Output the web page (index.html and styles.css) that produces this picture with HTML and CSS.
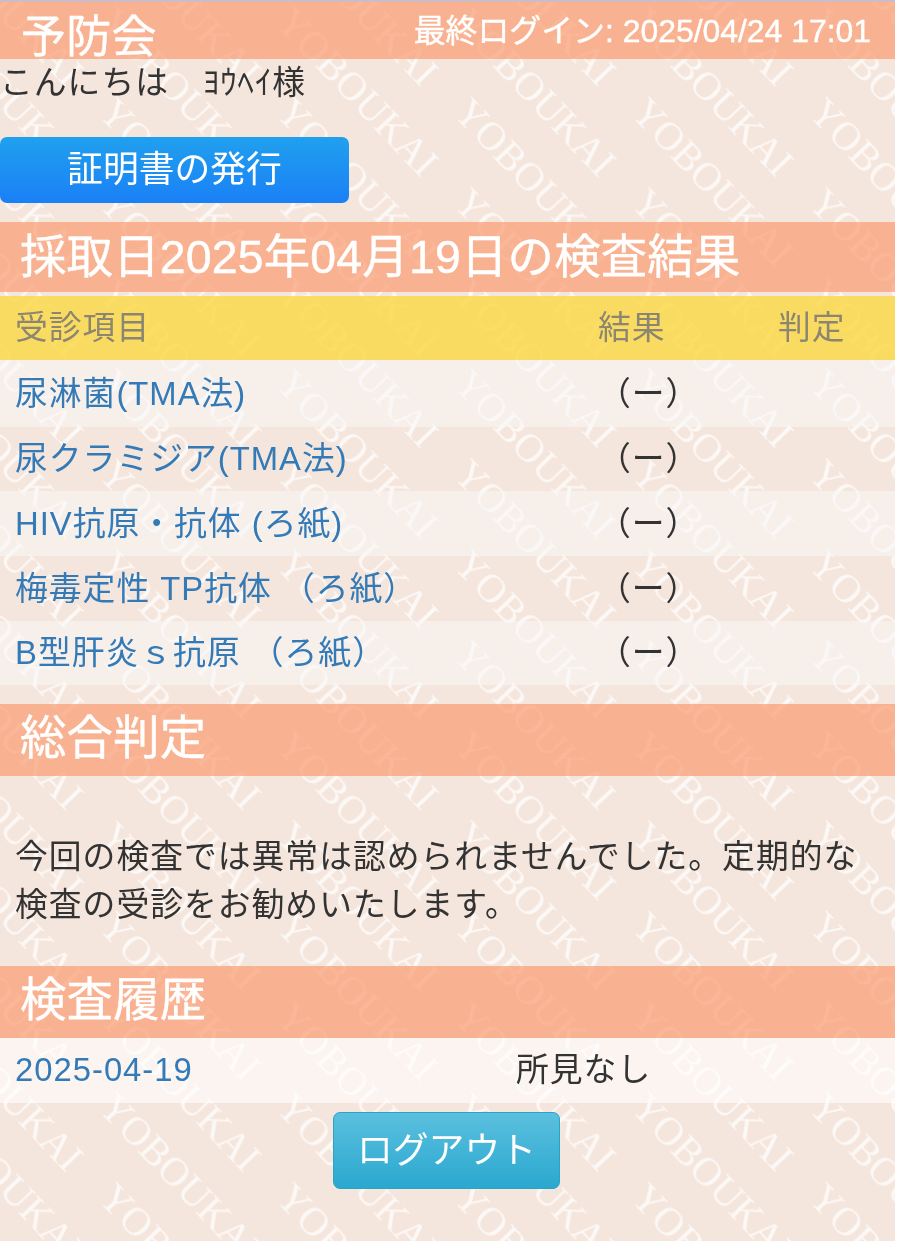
FILE: index.html
```html
<!DOCTYPE html>
<html lang="ja">
<head>
<meta charset="utf-8">
<title>予防会</title>
<link rel="stylesheet" href="styles.css">
</head>
<body>
<div class="page">
  <svg class="watermark" width="100%" height="100%" aria-hidden="true">
    <defs>
      <text id="wm" class="wm-text" transform="rotate(46.5)">YOBOUKAI</text>
      <pattern id="wm-tile" patternUnits="userSpaceOnUse" width="177.5" height="90.45" patternTransform="translate(95 21.5)">
        <use href="#wm" transform="translate(2 0)"/>
        <use href="#wm" transform="translate(2 90.45)"/>
        <use href="#wm" transform="translate(2 -90.45)"/>
        <use href="#wm" transform="translate(2 -180.9)"/>
      </pattern>
    </defs>
    <rect width="100%" height="100%" fill="url(#wm-tile)"/>
  </svg>
  <div class="content">
    <header class="bar top-bar">
      <span class="brand">予防会</span>
      <span class="last-login">最終ログイン: 2025/04/24 17:01</span>
    </header>
    <p class="hello">こんにちは　ﾖｳﾍｲ様</p>
    <a class="btn btn-cert">証明書の発行</a>
    <h2 class="bar section first">採取日2025年04月19日の検査結果</h2>
    <div class="grid head">
      <span class="c1">受診項目</span><span>結果</span><span>判定</span>
    </div>
    <div class="grid row odd r67"><a class="c1">尿淋菌(TMA法)</a><span>（ー）</span><span></span></div>
    <div class="grid row r64"><a class="c1">尿クラミジア(TMA法)</a><span>（ー）</span><span></span></div>
    <div class="grid row odd r65"><a class="c1">HIV抗原・抗体 (ろ紙)</a><span>（ー）</span><span></span></div>
    <div class="grid row r65"><a class="c1">梅毒定性 TP抗体 （ろ紙）</a><span>（ー）</span><span></span></div>
    <div class="grid row odd r64"><a class="c1">B型肝炎ｓ抗原 （ろ紙）</a><span>（ー）</span><span></span></div>
    <h2 class="bar section second">総合判定</h2>
    <p class="verdict">今回の検査では異常は認められませんでした。定期的な検査の受診をお勧めいたします。</p>
    <h2 class="bar section third">検査履歴</h2>
    <div class="history"><a class="c1">2025-04-19</a><span>所見なし</span></div>
    <div class="logout-wrap"><a class="btn btn-logout">ログアウト</a></div>
  </div>
</div>
</body>
</html>
```
FILE: styles.css
```css
html, body {
  margin: 0;
  height: 1241px;
  overflow: hidden;
  background: #fff;
}
body {
  font-family: "Liberation Sans", "Noto Sans CJK JP", sans-serif;
  font-size: 32.8px;
  letter-spacing: 1px;
  line-height: 48px;
  color: #333;
}
.page {
  position: relative;
  width: 895px;
  height: 1241px;
  background: #f5e6dd;
  border-top: 2px solid #cdbcc6;
  box-sizing: border-box;
}
.watermark {
  position: absolute;
  inset: 0;
}
.wm-text {
  font-family: "Liberation Serif", serif;
  font-size: 40px;
  letter-spacing: 0;
  fill: #fff;
  fill-opacity: 0.72;
}
.content {
  position: relative;
  filter: blur(0.3px);
}
.bar {
  background: rgba(250, 158, 116, 0.72);
  color: #fff;
  letter-spacing: 0.2px;
  -webkit-text-stroke: 0.4px #fff;
}
.top-bar {
  display: flex;
  justify-content: space-between;
  align-items: center;
  height: 57px;
  padding: 0 24px 0 21px;
}
.brand {
  font-size: 45px;
  line-height: 57px;
  position: relative;
  top: 7px;
}
.last-login {
  font-size: 31.9px;
  letter-spacing: 0;
  line-height: 57px;
  position: relative;
  top: 1px;
}
.hello {
  margin: 0;
  height: 78px;
  line-height: 48px;
}
.btn {
  display: flex;
  align-items: center;
  justify-content: center;
  box-sizing: border-box;
  color: #fff;
  font-size: 35.8px;
  letter-spacing: 0;
  border-radius: 7px;
}
.btn-cert {
  width: 349px;
  height: 66px;
  background: linear-gradient(#20a0ee, #1a80f6);
}
.section {
  margin: 0;
  font-size: 46.4px;
  font-weight: 400;
  padding-left: 20px;
  line-height: 70px;
}
.section.first { margin-top: 19px; height: 70px; }
.section.second { margin-top: 19px; height: 72px; line-height: 69px; }
.section.third { height: 72px; line-height: 68px; }
.grid {
  display: grid;
  grid-template-columns: 598px 180px 117px;
  align-items: center;
}
.c1 { padding-left: 15px; }
.head {
  margin-top: 4px;
  height: 64px;
  background: rgba(251, 218, 80, 0.88);
  color: #8b8672;
}
.row a, .history a { color: #337ab7; }
.r64 { height: 64px; }
.r65 { height: 65px; }
.r67 { height: 67px; }
.odd { background: rgba(248, 248, 248, 0.5); }
.verdict {
  margin: 0;
  padding: 57px 15px 37px;
}
.history {
  display: grid;
  grid-template-columns: 516px 1fr;
  align-items: center;
  height: 65px;
  background: rgba(255, 255, 255, 0.55);
}
.history a, .history span {
  position: relative;
  top: -1px;
}
.logout-wrap {
  display: flex;
  justify-content: center;
  padding-top: 9px;
  padding-right: 2px;
}
.btn-logout {
  width: 227px;
  height: 77px;
  background: linear-gradient(#5bc0de, #2aa8d0);
  border: 1px solid #28a4c9;
}
```
